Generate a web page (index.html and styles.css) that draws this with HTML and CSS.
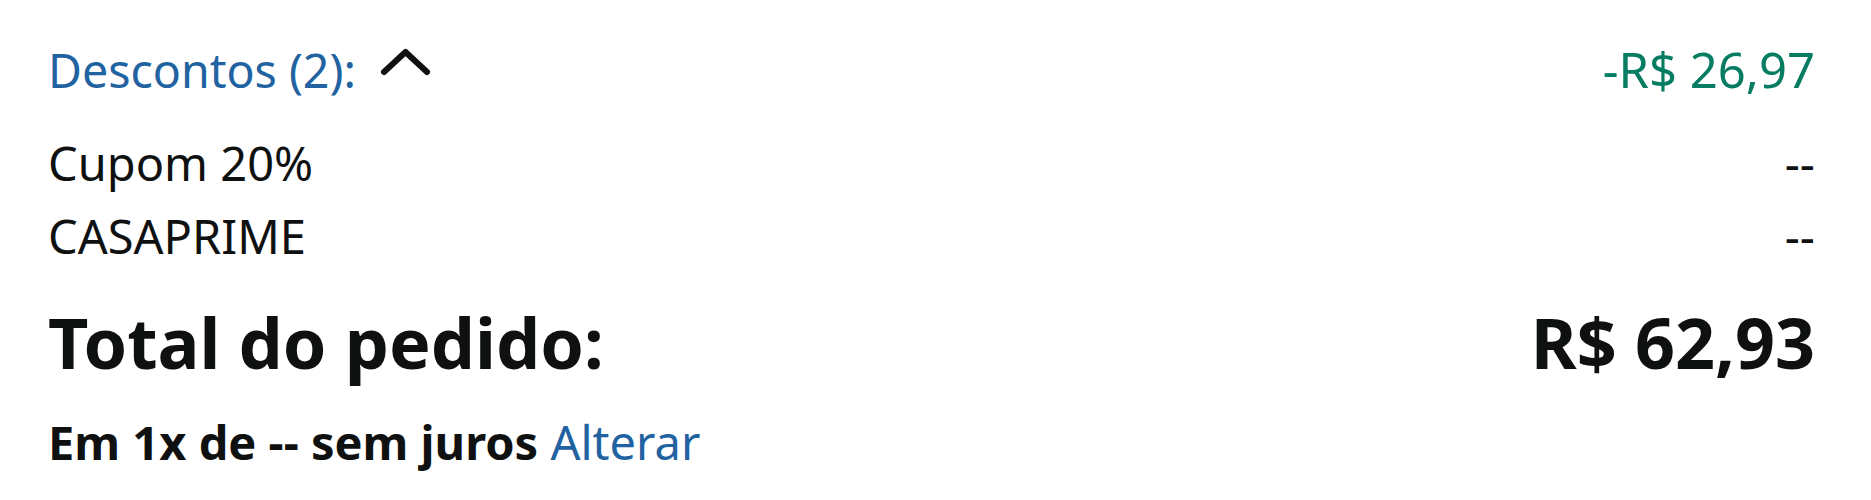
FILE: index.html
```html
<!DOCTYPE html>
<html lang="pt-BR">
<head>
<meta charset="utf-8">
<title>Resumo do pedido</title>
<link rel="stylesheet" href="styles.css">
</head>
<body>
<section class="summary">
  <div class="row row-discounts">
    <span class="discounts-toggle">
      <a class="link" href="#">Descontos (2):</a>
      <svg class="chevron" width="55" height="31" viewBox="0 0 55 31" aria-hidden="true">
        <polyline points="6,25 27.5,5 49,25" fill="none" stroke="#0f1111" stroke-width="6" stroke-linecap="round" stroke-linejoin="round"/>
      </svg>
    </span>
    <span class="amount-discount">-R$ 26,97</span>
  </div>
  <div class="row row-item">
    <span>Cupom 20%</span>
    <span>--</span>
  </div>
  <div class="row row-item">
    <span>CASAPRIME</span>
    <span>--</span>
  </div>
  <div class="row row-total">
    <span>Total do pedido:</span>
    <span>R$ 62,93</span>
  </div>
  <div class="row row-installments">
    <span><b>Em 1x de -- sem juros</b> <a class="link link-plain" href="#">Alterar</a></span>
  </div>
</section>
</body>
</html>
```
FILE: styles.css
```css
html, body {
  margin: 0;
  padding: 0;
  background: #ffffff;
}

body {
  font-family: "Noto Sans", "Open Sans", sans-serif;
  color: #0f1111;
}

.summary {
  display: flex;
  flex-direction: column;
  padding: 33px 56px 0 48px;
}

.row {
  display: flex;
  justify-content: space-between;
  align-items: baseline;
  font-size: 47px;
  line-height: 73px;
  white-space: nowrap;
}

.row-discounts {
  font-size: 46.5px;
  margin-bottom: 20px;
}

.discounts-toggle {
  display: inline-block;
}

.link {
  color: #2162a1;
  text-decoration: none;
}

.chevron {
  vertical-align: 10px;
  margin-left: 10px;
}

.amount-discount {
  color: #067d62;
  font-size: 49px;
}

.row-total {
  font-size: 70px;
  font-weight: 700;
  line-height: 90px;
  margin-top: 24px;
}

.row-installments {
  font-size: 47px;
  margin-top: 19px;
}

.row-installments b {
  font-weight: 700;
}

.link-plain {
  font-weight: 400;
}
```
